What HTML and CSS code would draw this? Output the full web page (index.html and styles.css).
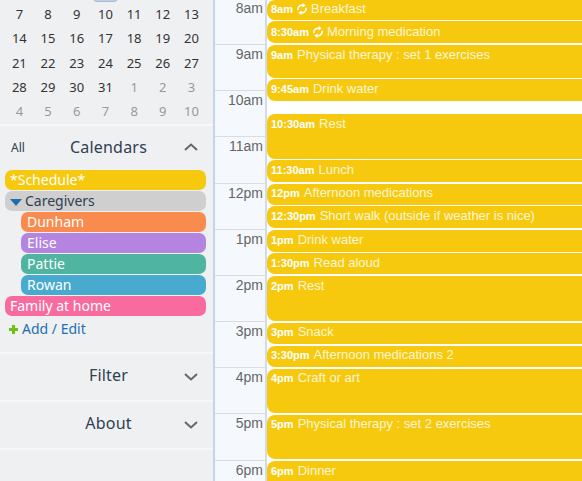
FILE: index.html
```html
<!DOCTYPE html>
<html lang="en">
<head>
    <meta charset="UTF-8">
    <title>Schedule</title>
    <link rel="stylesheet" href="styles.css">
</head>
<body>
    <div class="page">
        <div class="sidebar">
            <div class="mini">
                <span class="off"></span><span></span><span></span><span class="today"></span><span></span><span></span><span></span>
                <span>7</span><span>8</span><span>9</span><span>10</span><span>11</span><span>12</span><span>13</span>
                <span>14</span><span>15</span><span>16</span><span>17</span><span>18</span><span>19</span><span>20</span>
                <span>21</span><span>22</span><span>23</span><span>24</span><span>25</span><span>26</span><span>27</span>
                <span>28</span><span>29</span><span>30</span><span>31</span><span class="off">1</span><span class="off">2</span><span class="off">3</span>
                <span class="off">4</span><span class="off">5</span><span class="off">6</span><span class="off">7</span><span class="off">8</span><span class="off">9</span><span class="off">10</span>
            </div>
            <div class="section section-open">
                <div class="section-head">
                    <span class="all">All</span>
                    <span class="section-title">Calendars</span>
                    <svg class="chev" width="14" height="8" viewBox="0 0 14 8"><path d="M1 7L7 1.5L13 7" /></svg>
                </div>
                <ul class="cals">
                    <li class="cal yellow">*Schedule*</li>
                    <li class="cal grey"><svg class="tri" width="12" height="7" viewBox="0 0 12 7"><path d="M0 0H12L6 7Z" /></svg>Caregivers</li>
                    <li class="cal sub orange">Dunham</li>
                    <li class="cal sub purple">Elise</li>
                    <li class="cal sub green">Pattie</li>
                    <li class="cal sub blue">Rowan</li>
                    <li class="cal pink">Family at home</li>
                </ul>
                <div class="add"><svg class="plus" width="9" height="9" viewBox="0 0 9 9"><path d="M3 0H6V3H9V6H6V9H3V6H0V3H3Z" /></svg>Add / Edit</div>
            </div>
            <div class="section">
                <div class="section-head">
                    <span class="section-title">Filter</span>
                    <svg class="chev chev-down" width="14" height="8" viewBox="0 0 14 8"><path d="M1 1L7 6.5L13 1" /></svg>
                </div>
            </div>
            <div class="section">
                <div class="section-head">
                    <span class="section-title">About</span>
                    <svg class="chev chev-down" width="14" height="8" viewBox="0 0 14 8"><path d="M1 1L7 6.5L13 1" /></svg>
                </div>
            </div>
            <div class="section"></div>
        </div>
        <div class="hours">
            <div class="hour">8am</div>
            <div class="hour">9am</div>
            <div class="hour">10am</div>
            <div class="hour">11am</div>
            <div class="hour">12pm</div>
            <div class="hour">1pm</div>
            <div class="hour">2pm</div>
            <div class="hour">3pm</div>
            <div class="hour">4pm</div>
            <div class="hour">5pm</div>
            <div class="hour">6pm</div>
        </div>
        <div class="events">
            <div class="event h20 tight pad1"><b>8am</b><svg class="repeat" width="10" height="12" viewBox="0 0 10 12"><path d="M1 7.2a4 4 0 0 1 5.4-4.6M9 4.8a4 4 0 0 1-5.4 4.6" /><path class="fill" d="M5.6 0L8.8 2.6L5.2 4.6ZM4.4 12L1.2 9.4L4.8 7.4Z" /></svg>Breakfast</div>
            <div class="event h22 pad3"><b>8:30am</b><svg class="repeat" width="10" height="12" viewBox="0 0 10 12"><path d="M1 7.2a4 4 0 0 1 5.4-4.6M9 4.8a4 4 0 0 1-5.4 4.6" /><path class="fill" d="M5.6 0L8.8 2.6L5.2 4.6ZM4.4 12L1.2 9.4L4.8 7.4Z" /></svg>Morning medication</div>
            <div class="event h33 tight"><b>9am</b>Physical therapy : set 1 exercises</div>
            <div class="event h22 before-gap"><b>9:45am</b>Drink water</div>
            <div class="event h45 tight"><b>10:30am</b>Rest</div>
            <div class="event h22"><b>11:30am</b>Lunch</div>
            <div class="event h21 tight pad1"><b>12pm</b>Afternoon medications</div>
            <div class="event h22"><b>12:30pm</b>Short walk (outside if weather is nice)</div>
            <div class="event h22 tight"><b>1pm</b>Drink water</div>
            <div class="event h21"><b>1:30pm</b>Read aloud</div>
            <div class="event h45"><b>2pm</b>Rest</div>
            <div class="event h21 pad1"><b>3pm</b>Snack</div>
            <div class="event h21 pad1"><b>3:30pm</b>Afternoon medications 2</div>
            <div class="event h44 pad1"><b>4pm</b>Craft or art</div>
            <div class="event h44 pad1"><b>5pm</b>Physical therapy : set 2 exercises</div>
            <div class="event h44"><b>6pm</b>Dinner</div>
        </div>
    </div>
</body>
</html>
```

FILE: styles.css
```css
* {
    margin: 0;
    padding: 0;
    box-sizing: border-box;
}
body {
    width: 582px;
    height: 481px;
    overflow: hidden;
    background: #fff;
}
.page {
    display: flex;
    height: 481px;
    overflow: hidden;
}

/* left column */
.sidebar {
    width: 213px;
    flex: none;
    background: #eff0f2;
    font-family: "Noto Sans", sans-serif;
    color: #2f4050;
}
.mini {
    display: grid;
    grid-template-columns: repeat(7, 28.7px);
    grid-auto-rows: 24.2px;
    margin: -22px 0 0 5px;
    height: 146px;
    font-size: 13px;
    text-align: center;
    line-height: 24px;
    color: #333;
}
.mini .off {
    color: #999;
}
.mini .today {
    margin: 0 2px;
    background: #c3d0e4;
    border: 1px solid #a9b8d0;
    border-radius: 4px;
}
.section {
    border-top: 2px solid #f8f8f9;
    height: 48px;
}
.section-open {
    height: 228px;
}
.section-head {
    position: relative;
    height: 42px;
    padding-left: 4px;
    display: flex;
    align-items: center;
    justify-content: center;
}
.section-title {
    font-size: 16px;
    letter-spacing: 0.2px;
}
.all {
    position: absolute;
    left: 11px;
    top: 13px;
    font-size: 12px;
}
.chev {
    position: absolute;
    right: 15px;
    top: 17px;
    fill: none;
    stroke: #666;
    stroke-width: 2;
}
.chev-down {
    top: 19px;
}
.cals {
    list-style: none;
    margin: 2px 7px 0 5px;
    display: flex;
    flex-direction: column;
    gap: 1px;
}
.cal {
    height: 20px;
    line-height: 20px;
    padding-left: 5px;
    border-radius: 7px;
    font-size: 14px;
    color: #fff;
}
.sub {
    margin-left: 16px;
    padding-left: 6px;
}
.yellow { background: #f6c90f; }
.grey { background: #cfcfcf; color: #2f4050; }
.orange { background: #f98b4e; }
.purple { background: #b484e0; }
.green { background: #50b5a0; }
.blue { background: #48aacf; }
.pink { background: #f96b9e; }
.tri {
    fill: #1f6fb0;
    margin-right: 3px;
}
.add {
    margin: 3px 0 0 9px;
    font-size: 14px;
    line-height: 20px;
    color: #1f6fb0;
}
.plus {
    fill: #6cc310;
    margin-right: 4px;
}

/* time gutter */
.hours {
    width: 54px;
    flex: none;
    margin-top: -2px;
    background: #f5f9fd;
    border-left: 2px solid #c5d3f0;
    border-right: 2px solid #d5dbe6;
    font-family: "Liberation Sans", sans-serif;
    font-size: 14px;
    color: #666;
    text-align: right;
}
.hour {
    height: 46.17px;
    padding: 1px 2px 0 0;
    border-top: 1px solid #d8dde3;
    line-height: 17px;
}

/* day column */
.events {
    flex: 1;
    display: flex;
    flex-direction: column;
    font-family: "Liberation Sans", sans-serif;
    font-size: 13px;
    color: #fdf6d5;
}
.event {
    flex: none;
    margin-bottom: 2px;
    padding: 2px 0 0 4px;
    background: #f6c90f;
    border-radius: 8px 0 0 8px;
    line-height: 15px;
    white-space: nowrap;
}
.event b {
    font-size: 11px;
    color: #fff;
    margin-right: 4px;
}
.h20 { height: 20px; }
.h21 { height: 21px; }
.h22 { height: 22px; }
.h33 { height: 33px; }
.h44 { height: 44px; }
.h45 { height: 45px; }
.tight { margin-bottom: 1px; }
.pad1 { padding-top: 1px; }
.pad3 { padding-top: 3px; }
.before-gap {
    margin-bottom: 13px;
}
.repeat {
    margin-right: 4px;
    vertical-align: -2px;
    fill: none;
    stroke: #fff;
    stroke-width: 1.6;
}
.repeat .fill {
    fill: #fff;
    stroke: none;
}
```
